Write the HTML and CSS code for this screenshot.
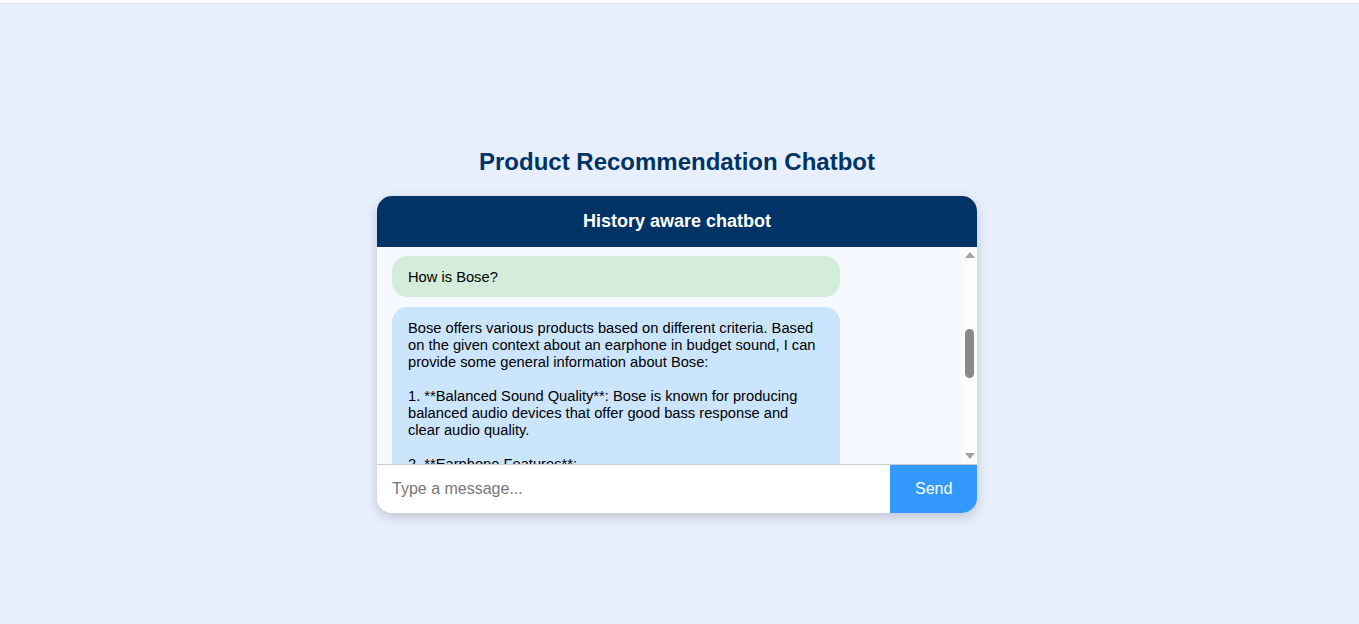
FILE: index.html
```html
<!DOCTYPE html>
<html lang="en">
<head>
<meta charset="utf-8">
<title>Product Recommendation Chatbot</title>
<link rel="stylesheet" href="styles.css">
</head>
<body>
<div class="page">
  <h1 class="title">Product Recommendation Chatbot</h1>
  <div class="chat">
    <div class="chat-header">History aware chatbot</div>
    <div class="chat-body">
      <div class="messages">
        <div class="msg msg-user">How is Bose?</div>
        <div class="msg msg-bot">Bose offers various products based on different criteria. Based on the given context about an earphone in budget sound, I can provide some general information about Bose:

1. **Balanced Sound Quality**: Bose is known for producing balanced audio devices that offer good bass response and clear audio quality.

2. **Earphone Features**:
- **Noise Cancellation**: Many Bose earphones come with active noise cancellation.</div>
      </div>
      <div class="scrollbar">
        <span class="arrow arrow-up"></span>
        <div class="track"><span class="thumb"></span></div>
        <span class="arrow arrow-down"></span>
      </div>
    </div>
    <div class="chat-input">
      <input class="input" type="text" placeholder="Type a message...">
      <button class="send">Send</button>
    </div>
  </div>
</div>
</body>
</html>
```

FILE: styles.css
```css
* { box-sizing: border-box; }
html, body { margin: 0; padding: 0; }
body {
  background: #e8effc;
  font-family: "Liberation Sans", Arial, sans-serif;
  border-top: 3px solid #ffffff;
  height: 624px;
  overflow: hidden;
}
.page {
  border-top: 1px solid #dcdfe4;
  display: flex;
  flex-direction: column;
  align-items: center;
  padding: 144px 5px 0 0;
}
.title {
  margin: 0 0 20px;
  font-size: 24px;
  font-weight: bold;
  color: #003366;
  line-height: 28px;
}
.chat {
  width: 600px;
  border-radius: 15px;
  background: #ffffff;
  box-shadow: 0 4px 12px rgba(0, 0, 0, 0.18);
  overflow: hidden;
}
.chat-header {
  background: #003366;
  color: #ffffff;
  font-weight: bold;
  font-size: 18px;
  text-align: center;
  padding: 15px;
  line-height: 21px;
}
.chat-body {
  display: flex;
  height: 217px;
  background: #f6f9ff;
}
.messages {
  flex: 1;
  overflow: hidden;
  padding: 9px 0 0 15px;
  display: flex;
  flex-direction: column;
  gap: 10px;
}
.msg {
  width: 448px;
  flex: none;
  padding: 13px 16px 11px;
  border-radius: 15px;
  font-size: 14.7px;
  line-height: 17px;
  color: #000000;
  white-space: pre-wrap;
}
.msg-user { background: #d4edda; }
.msg-bot { background: #cce5ff; }
.scrollbar {
  width: 15px;
  flex: none;
  background: #fcfcfc;
  display: flex;
  flex-direction: column;
  align-items: center;
  padding: 5px 0;
}
.arrow {
  width: 0;
  height: 0;
  border-left: 5px solid transparent;
  border-right: 5px solid transparent;
}
.arrow-up { border-bottom: 6px solid #a3a3a3; }
.arrow-down { border-top: 6px solid #a3a3a3; }
.track {
  flex: 1;
  width: 100%;
  display: flex;
  justify-content: center;
}
.thumb {
  margin-top: 71px;
  width: 9px;
  height: 49px;
  border-radius: 5px;
  background: #8a8a8a;
}
.chat-input {
  display: flex;
  border-top: 1px solid #cccccc;
}
.input {
  flex: 1;
  border: none;
  outline: none;
  padding: 15px;
  font-size: 16px;
  line-height: 18px;
  font-family: "Liberation Sans", Arial, sans-serif;
  background: #ffffff;
  color: #000000;
}
.input::placeholder { color: #777777; }
.send {
  border: none;
  background: #3399ff;
  color: #ffffff;
  font-size: 16px;
  font-family: "Liberation Sans", Arial, sans-serif;
  padding: 0 25px;
  width: 87px;
  cursor: pointer;
}
```
